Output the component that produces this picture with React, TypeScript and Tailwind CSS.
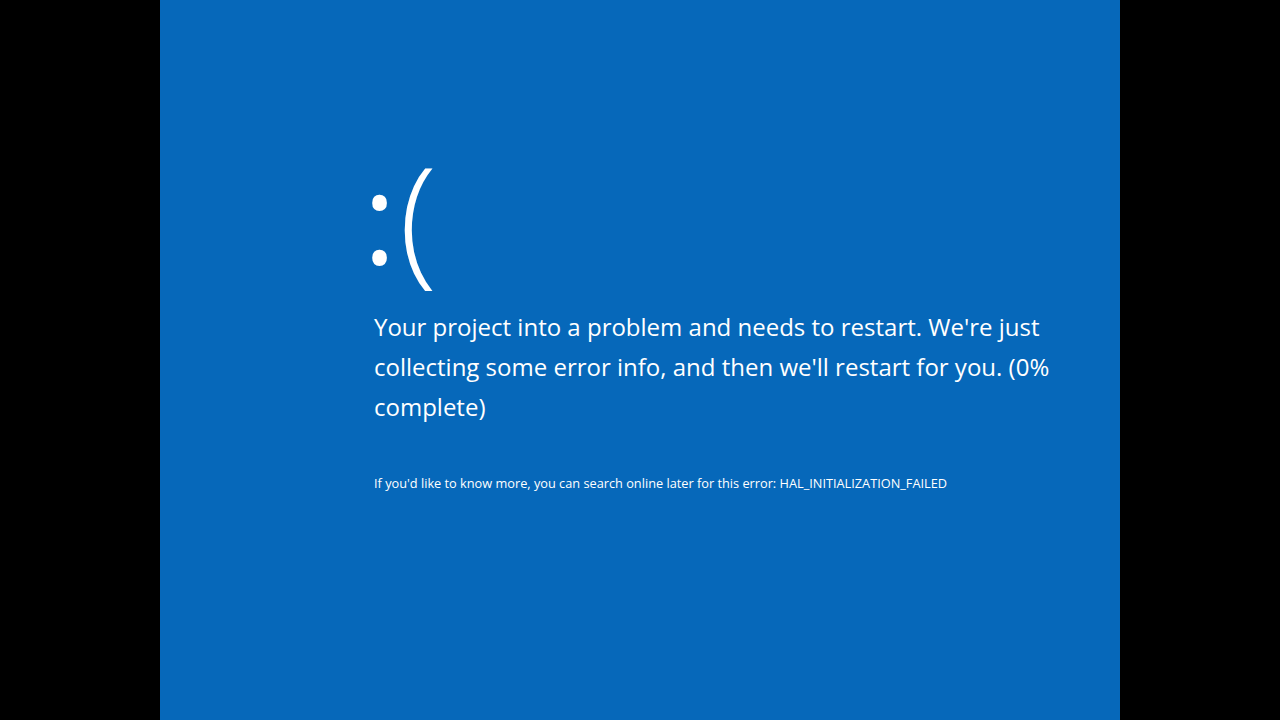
import React from "react";

const App = () => {
    return (
        <div className="flex h-[720px] w-[1280px] bg-black">
            <div className="ml-[160px] h-full w-[960px] bg-[#0668ba] pl-[214px] pt-[150px] text-white font-['Open_Sans',sans-serif]">
                <div className="-mt-[10px] h-[160px] whitespace-nowrap leading-[150px]">
                    <span className="-ml-[11px] align-[5px] text-[126px] font-normal">:</span>
                    <span className="ml-[3px] text-[140px] font-light">(</span>
                </div>
                <div className="mt-[7px] text-[24px] font-normal leading-[40px]">
                    <div className="whitespace-nowrap">Your project into a problem and needs to restart. We're just</div>
                    <div className="whitespace-nowrap">collecting some error info, and then we'll restart for you. (0%</div>
                    <div className="whitespace-nowrap">complete)</div>
                </div>
                <div className="mt-[48px] whitespace-nowrap text-[12.75px] leading-[16px]">
                    If you'd like to know more, you can search online later for this error: HAL_INITIALIZATION_FAILED
                </div>
            </div>
        </div>
    );
};

export default App;
